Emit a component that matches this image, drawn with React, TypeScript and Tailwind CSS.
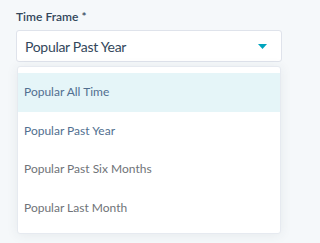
export default function App() {
  const options = [
    { label: "Popular All Time", active: true, color: "text-[#516f90]" },
    { label: "Popular Past Year", active: false, color: "text-[#516f90]" },
    { label: "Popular Past Six Months", active: false, color: "text-[#6f7378]" },
    { label: "Popular Last Month", active: false, color: "text-[#6f7378]" },
  ];

  return (
    <div className="w-full min-h-screen bg-[#f5f8fa] px-4 pt-[9px] font-['Lato','Open_Sans',sans-serif]">
      <label className="block text-[12px] leading-4 font-semibold text-[#33475b]">Time Frame *</label>
      <div className="mt-[5px] w-[266px] h-8 bg-white border border-[#dfe3eb] rounded-[3px] flex items-center justify-between pl-[8px] pr-[14px]">
        <span className="text-[14px] tracking-[-0.3px] text-[#33475b]">Popular Past Year</span>
        <svg width="9" height="5" viewBox="0 0 9 5">
          <path d="M0 0 H9 L4.5 5 Z" fill="#00a4bd" />
        </svg>
      </div>
      <div className="mt-1 ml-px w-[264px] bg-white rounded-[3px] border border-[#e6eaf0] shadow-[0_1px_12px_rgba(45,62,80,0.08)] pt-[6px] pb-[6px]">
        {options.map((o) => (
          <div
            key={o.label}
            className={
              "h-[38.5px] flex items-center pl-[6px] text-[12px] " +
              o.color +
              (o.active ? " bg-[#e5f5f8]" : "")
            }
          >
            {o.label}
          </div>
        ))}
      </div>
    </div>
  );
}
